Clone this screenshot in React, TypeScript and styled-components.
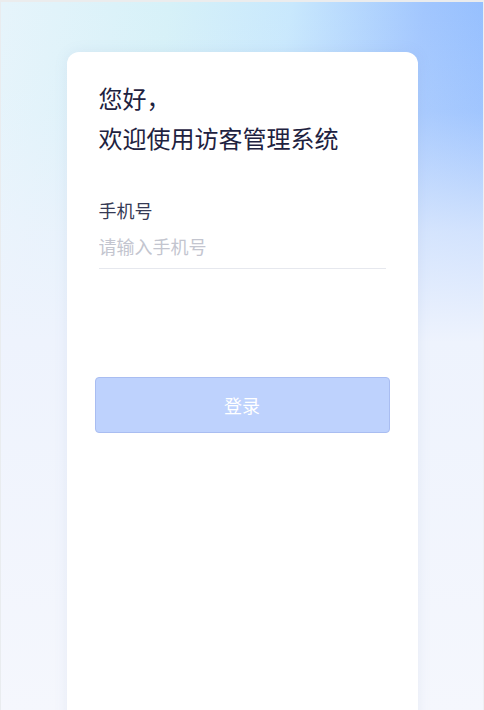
import React from "react";
import styled, { createGlobalStyle } from "styled-components";

const GlobalStyle = createGlobalStyle`
  html, body {
    margin: 0;
    padding: 0;
    background: #f5f7fd;
  }
  body {
    font-family: "Noto Sans CJK SC", "Noto Sans", sans-serif;
    overflow: hidden;
  }
  * { box-sizing: border-box; }
`;

const Frame = styled.div`
  width: 484px;
  height: 710px;
  overflow: hidden;
  border-top: 2px solid #ebeced;
  border-left: 1px solid #e9ecef;
  border-right: 1px solid #eef0f3;
  background:
    linear-gradient(to bottom, rgba(238, 243, 253, 0) 0px, rgba(238, 243, 253, 0.15) 110px, rgba(238, 243, 253, 0.7) 230px, #eef3fd 340px, #f5f7fd 710px),
    linear-gradient(100deg, #e6f4fb 0%, #d6f1f8 28%, #c8e8fd 48%, #a1c6fe 70%, #80b2ff 100%);
  display: flex;
  justify-content: center;
  padding-top: 50px;
`;

const Card = styled.main`
  width: 351px;
  min-height: 720px;
  background: #ffffff;
  border-radius: 12px;
  box-shadow: 0 0 14px rgba(110, 130, 190, 0.1);
  padding: 26px 32px 0;
  display: flex;
  flex-direction: column;
`;

const Heading = styled.h1`
  margin: 0;
  font-size: 24px;
  font-weight: 400;
  line-height: 40px;
  color: #1e2240;
`;

const Field = styled.div`
  margin-top: 40px;
  display: flex;
  flex-direction: column;
`;

const Label = styled.label`
  font-size: 18px;
  line-height: 24px;
  color: #363a55;
`;

const Input = styled.input`
  margin-top: 1px;
  height: 46px;
  border: none;
  border-bottom: 1px solid #e6e8ee;
  outline: none;
  padding: 0;
  font-family: inherit;
  font-size: 18px;
  color: #1e2240;
  background: transparent;
  &::placeholder {
    color: #c3c5cf;
  }
`;

const LoginButton = styled.button`
  margin: 108px -4px 0;
  height: 56px;
  border: 1px solid #a9bdf1;
  border-radius: 4px;
  background: #bed2fd;
  color: #ffffff;
  font-family: inherit;
  font-size: 18px;
  cursor: not-allowed;
`;

export default function App() {
  return (
    <>
      <GlobalStyle />
      <Frame>
        <Card>
          <Heading>
            您好，
            <br />
            欢迎使用访客管理系统
          </Heading>
          <Field>
            <Label htmlFor="phone">手机号</Label>
            <Input id="phone" type="tel" placeholder="请输入手机号" />
          </Field>
          <LoginButton disabled>登录</LoginButton>
        </Card>
      </Frame>
    </>
  );
}
